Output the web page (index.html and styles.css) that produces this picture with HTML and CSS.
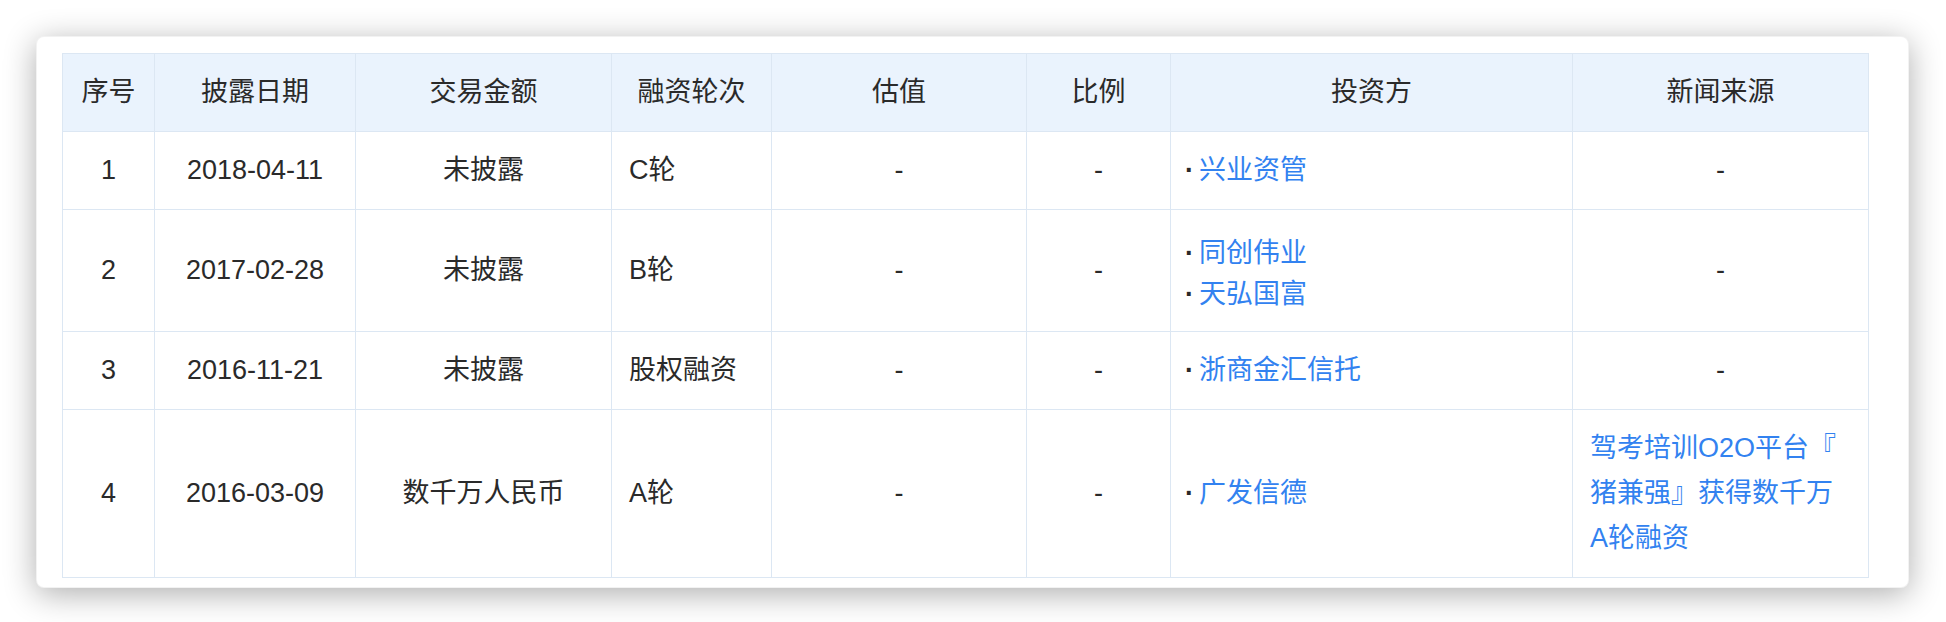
FILE: index.html
```html
<!DOCTYPE html>
<html lang="zh-CN">
<head>
<meta charset="utf-8">
<title>融资历程</title>
<link rel="stylesheet" href="styles.css">
</head>
<body>
<div class="card">
  <table class="fin-table">
    <colgroup>
      <col class="c-no">
      <col class="c-date">
      <col class="c-amount">
      <col class="c-round">
      <col class="c-val">
      <col class="c-ratio">
      <col class="c-inv">
      <col class="c-news">
    </colgroup>
    <thead>
      <tr>
        <th>序号</th>
        <th>披露日期</th>
        <th>交易金额</th>
        <th>融资轮次</th>
        <th>估值</th>
        <th>比例</th>
        <th>投资方</th>
        <th>新闻来源</th>
      </tr>
    </thead>
    <tbody>
      <tr>
        <td>1</td>
        <td>2018-04-11</td>
        <td>未披露</td>
        <td class="left">C轮</td>
        <td>-</td>
        <td>-</td>
        <td class="left"><ul class="inv"><li><span class="dot">·</span><a href="#">兴业资管</a></li></ul></td>
        <td>-</td>
      </tr>
      <tr>
        <td>2</td>
        <td>2017-02-28</td>
        <td>未披露</td>
        <td class="left">B轮</td>
        <td>-</td>
        <td>-</td>
        <td class="left"><ul class="inv multi"><li><span class="dot">·</span><a href="#">同创伟业</a></li><li><span class="dot">·</span><a href="#">天弘国富</a></li></ul></td>
        <td>-</td>
      </tr>
      <tr>
        <td>3</td>
        <td>2016-11-21</td>
        <td>未披露</td>
        <td class="left">股权融资</td>
        <td>-</td>
        <td>-</td>
        <td class="left"><ul class="inv"><li><span class="dot">·</span><a href="#">浙商金汇信托</a></li></ul></td>
        <td>-</td>
      </tr>
      <tr>
        <td>4</td>
        <td>2016-03-09</td>
        <td>数千万人民币</td>
        <td class="left">A轮</td>
        <td>-</td>
        <td>-</td>
        <td class="left"><ul class="inv"><li><span class="dot">·</span><a href="#">广发信德</a></li></ul></td>
        <td class="left"><a href="#" class="news">驾考培训O2O平台『<br>猪兼强』获得数千万<br>A轮融资</a></td>
      </tr>
    </tbody>
  </table>
</div>
</body>
</html>
```
FILE: styles.css
```css
html, body {
  margin: 0;
  padding: 0;
  background: #ffffff;
}

body {
  padding: 36px 37px 36px 36px;
  font-family: "Liberation Sans", "Noto Sans CJK SC", sans-serif;
  font-size: 27px;
  color: #2a2a2a;
}

.card {
  width: 1873px;
  box-sizing: border-box;
  background: #ffffff;
  border-radius: 8px;
  border: 1px solid rgba(0, 0, 0, 0.05);
  box-shadow: 0 6px 32px rgba(0, 0, 0, 0.32);
  padding: 16px 40px 9px 25px;
}

.fin-table {
  width: 1806px;
  table-layout: fixed;
  border-collapse: collapse;
}

.c-no { width: 92px; }
.c-date { width: 201px; }
.c-amount { width: 256px; }
.c-round { width: 160px; }
.c-val { width: 255px; }
.c-ratio { width: 144px; }
.c-inv { width: 402px; }
.c-news { width: 296px; }

.fin-table th,
.fin-table td {
  border: 1px solid #dce7f3;
  padding: 16px 17px;
  line-height: 45px;
  text-align: center;
  vertical-align: middle;
  font-weight: normal;
  color: #2a2a2a;
}

.fin-table th {
  background: #eaf3fd;
}

.fin-table td.left {
  text-align: left;
}

.inv {
  list-style: none;
  margin: 0;
  padding: 0;
  line-height: 45px;
}

.inv.multi {
  padding-top: 7px;
  line-height: 41px;
}

.dot {
  display: inline-block;
  width: 14px;
  margin-left: -3px;
  font-weight: bold;
  color: #2a2a2a;
}

.fin-table a {
  color: #3282f0;
  text-decoration: none;
}

.news {
  display: block;
  line-height: 45px;
  white-space: nowrap;
}
```
